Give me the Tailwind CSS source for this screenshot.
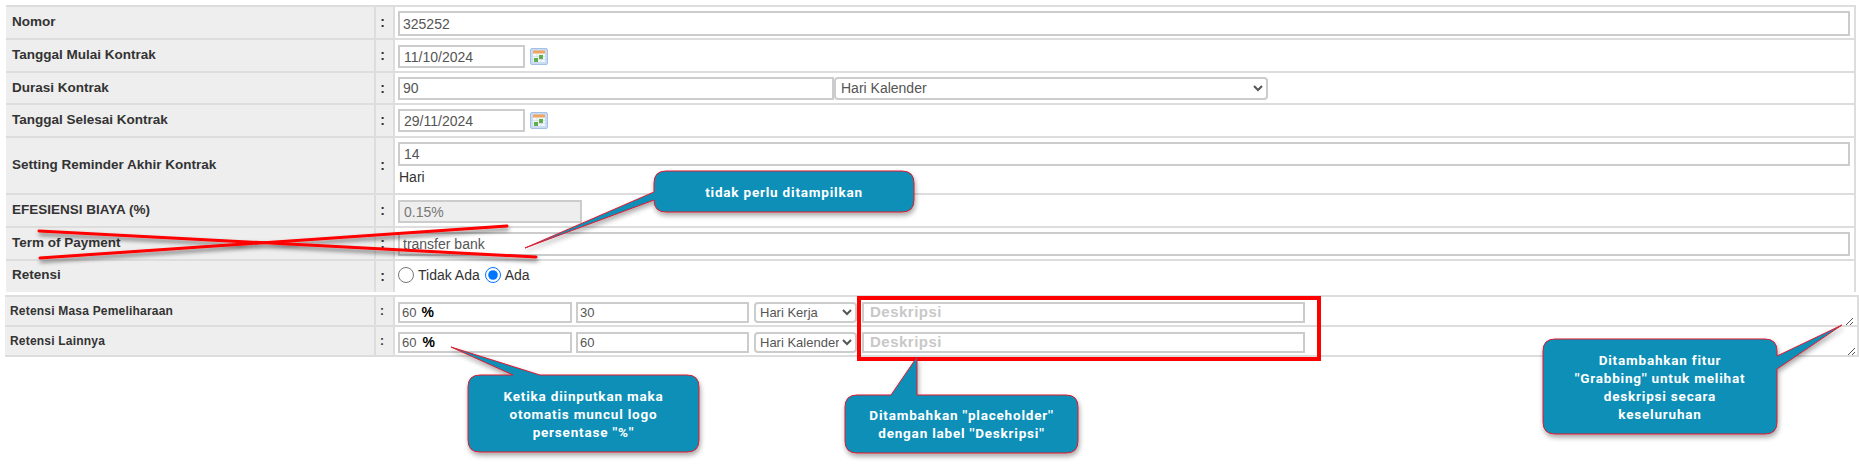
<!DOCTYPE html>
<html lang="en">
<head>
    <meta charset="UTF-8">
    <title>Kontrak</title>
    <script src="https://cdn.jsdelivr.net/npm/@tailwindcss/browser@4"></script>
</head>
<body class="relative h-[464px] overflow-hidden bg-white font-['Liberation_Sans',Arial,sans-serif] text-[14px] text-[#333]">

    <!-- form utama -->
    <div class="pt-[5px] pl-[6px] pr-[3px]">
        <table class="w-full table-fixed border-collapse border-t-2 border-[#ddd]">
            <colgroup>
                <col class="w-[369px]">
                <col class="w-[19px]">
                <col>
            </colgroup>
            <tbody>
                <tr class="h-[33px]">
                    <td class="bg-[#eee] border-b-2 border-r-2 border-[#ddd] pl-[6px] text-[13.5px] font-bold">Nomor</td>
                    <td class="bg-[#eee] border-b-2 border-r-2 border-[#ddd] pr-[4px] text-center font-bold">:</td>
                    <td class="border-b-2 border-r-2 border-[#ddd] pl-[3px] pr-[4px] pt-[2px]">
                        <input type="text" value="325252" class="block w-full h-[25px] border-2 border-[#ccc] px-[3px] text-[#555]">
                    </td>
                </tr>
                <tr class="h-[33px]">
                    <td class="bg-[#eee] border-b-2 border-r-2 border-[#ddd] pl-[6px] text-[13.5px] font-bold">Tanggal Mulai Kontrak</td>
                    <td class="bg-[#eee] border-b-2 border-r-2 border-[#ddd] pr-[4px] text-center font-bold">:</td>
                    <td class="border-b-2 border-r-2 border-[#ddd] pl-[3px] pr-[4px] pt-[2px]">
                        <div class="flex items-center gap-[5px]">
                            <input type="text" value="11/10/2024" class="w-[127px] h-[23px] border-2 border-[#ccc] px-[4px] text-[#555]">
                            <svg width="18" height="17" viewBox="0 0 18 17">
                                <rect x="0.5" y="0.5" width="17" height="16" rx="1.5" fill="#c9dcf3" stroke="#a5c0e4"/>
                                <rect x="3" y="3" width="12" height="11" fill="#f4f8fb"/>
                                <rect x="3" y="2.5" width="12" height="3" fill="#f0a45c"/>
                                <path d="M3 8.5H15M3 11.5H15M7 6V14M11 6V14" stroke="#cfdbe6" stroke-width="0.7"/>
                                <rect x="4" y="10" width="4" height="4" fill="#62ad4a"/>
                                <rect x="9" y="7" width="4" height="4" fill="#62ad4a"/>
                            </svg>
                        </div>
                    </td>
                </tr>
                <tr class="h-[32px]">
                    <td class="bg-[#eee] border-b-2 border-r-2 border-[#ddd] pl-[6px] text-[13.5px] font-bold">Durasi Kontrak</td>
                    <td class="bg-[#eee] border-b-2 border-r-2 border-[#ddd] pr-[4px] text-center font-bold">:</td>
                    <td class="border-b-2 border-r-2 border-[#ddd] pl-[3px] pr-[4px]">
                        <div class="flex">
                            <input type="text" value="90" class="w-[436px] h-[23px] border-2 border-[#ccc] px-[3px] text-[#555]">
                            <select class="w-[434px] h-[23px] border-2 border-[#ccc] rounded-[4px] bg-white pl-[1px] text-[#555]">
                                <option>Hari Kalender</option>
                            </select>
                        </div>
                    </td>
                </tr>
                <tr class="h-[33px]">
                    <td class="bg-[#eee] border-b-2 border-r-2 border-[#ddd] pl-[6px] text-[13.5px] font-bold">Tanggal Selesai Kontrak</td>
                    <td class="bg-[#eee] border-b-2 border-r-2 border-[#ddd] pr-[4px] text-center font-bold">:</td>
                    <td class="border-b-2 border-r-2 border-[#ddd] pl-[3px] pr-[4px]">
                        <div class="flex items-center gap-[5px]">
                            <input type="text" value="29/11/2024" class="w-[127px] h-[23px] border-2 border-[#ccc] px-[4px] text-[#555]">
                            <svg width="18" height="17" viewBox="0 0 18 17">
                                <rect x="0.5" y="0.5" width="17" height="16" rx="1.5" fill="#c9dcf3" stroke="#a5c0e4"/>
                                <rect x="3" y="3" width="12" height="11" fill="#f4f8fb"/>
                                <rect x="3" y="2.5" width="12" height="3" fill="#f0a45c"/>
                                <path d="M3 8.5H15M3 11.5H15M7 6V14M11 6V14" stroke="#cfdbe6" stroke-width="0.7"/>
                                <rect x="4" y="10" width="4" height="4" fill="#62ad4a"/>
                                <rect x="9" y="7" width="4" height="4" fill="#62ad4a"/>
                            </svg>
                        </div>
                    </td>
                </tr>
                <tr class="h-[57px]">
                    <td class="bg-[#eee] border-b-2 border-r-2 border-[#ddd] pl-[6px] text-[13.5px] font-bold">Setting Reminder Akhir Kontrak</td>
                    <td class="bg-[#eee] border-b-2 border-r-2 border-[#ddd] pr-[4px] text-center font-bold">:</td>
                    <td class="align-top border-b-2 border-r-2 border-[#ddd] pl-[3px] pr-[4px] pt-[4px]">
                        <input type="text" value="14" class="block w-full h-[24px] border-2 border-[#ccc] px-[4px] text-[#555]">
                        <div class="mt-[3px] pl-[1px] leading-[17px]">Hari</div>
                    </td>
                </tr>
                <tr class="h-[33px]">
                    <td class="bg-[#eee] border-b-2 border-r-2 border-[#ddd] pl-[6px] text-[13.5px] font-bold">EFESIENSI BIAYA (%)</td>
                    <td class="bg-[#eee] border-b-2 border-r-2 border-[#ddd] pr-[4px] text-center font-bold">:</td>
                    <td class="border-b-2 border-r-2 border-[#ddd] pl-[3px] pr-[4px] pt-[2px]">
                        <input type="text" value="0.15%" disabled class="block w-[184px] h-[23px] border-2 border-[#ccc] bg-[#eee] px-[4px] text-[#777]">
                    </td>
                </tr>
                <tr class="h-[33px]">
                    <td class="bg-[#eee] border-b-2 border-r-2 border-[#ddd] pl-[6px] text-[13.5px] font-bold">Term of Payment</td>
                    <td class="bg-[#eee] border-b-2 border-r-2 border-[#ddd] pr-[4px] text-center font-bold">:</td>
                    <td class="border-b-2 border-r-2 border-[#ddd] pl-[3px] pr-[4px]">
                        <input type="text" value="transfer bank" class="block w-full h-[24px] border-2 border-[#ccc] px-[3px] text-[#555]">
                    </td>
                </tr>
                <tr class="h-[32px]">
                    <td class="bg-[#eee] border-r-2 border-[#ddd] pl-[6px] pb-[2px] text-[13.5px] font-bold">Retensi</td>
                    <td class="bg-[#eee] border-r-2 border-[#ddd] pr-[4px] text-center font-bold">:</td>
                    <td class="border-r-2 border-[#ddd] pl-[3px] pr-[4px] pb-[3px]">
                        <div class="flex items-center">
                            <input type="radio" name="retensi" class="w-4 h-4 m-0">
                            <span class="ml-[4px] mr-[5px]">Tidak Ada</span>
                            <input type="radio" name="retensi" checked class="w-4 h-4 m-0">
                            <span class="ml-[4px]">Ada</span>
                        </div>
                    </td>
                </tr>
            </tbody>
        </table>
    </div>

    <!-- retensi -->
    <div class="mt-[3px] pl-[5px]">
        <table class="w-full table-fixed border-collapse border-t-2 border-[#ddd]">
            <colgroup>
                <col class="w-[370px]">
                <col class="w-[19px]">
                <col>
            </colgroup>
            <tbody>
                <tr class="h-[30px]">
                    <td class="bg-[#eee] border-b-2 border-r-2 border-[#ddd] pl-[5px] text-[12px] tracking-[0.2px] font-bold">Retensi Masa Pemeliharaan</td>
                    <td class="bg-[#eee] border-b-2 border-r-2 border-[#ddd] pr-[5px] text-center text-[12px] font-bold">:</td>
                    <td class="border-b-2 border-r-2 border-[#ddd] pl-[3px] pr-[4px] pt-[3px]">
                        <div class="flex text-[13px]">
                            <div class="flex items-center w-[174px] h-[21px] border-2 border-[#ccc] px-[2px] text-[#555]">60<b class="ml-[5px] text-[14px] text-black">%</b></div>
                            <input type="text" value="30" class="ml-[4px] w-[173px] h-[21px] border-2 border-[#ccc] px-[2px] text-[#555]">
                            <select class="ml-[5px] w-[103px] h-[21px] border-2 border-[#ccc] rounded-[4px] bg-white text-[#555]">
                                <option>Hari Kerja</option>
                            </select>
                            <input type="text" placeholder="Deskripsi" class="ml-[5px] w-[443px] h-[21px] border-2 border-[#ccc] px-[6px] text-[15px] font-bold tracking-[0.5px] placeholder:text-[#c8c8c8]">
                        </div>
                    </td>
                </tr>
                <tr class="h-[30px]">
                    <td class="bg-[#eee] border-b-2 border-r-2 border-[#ddd] pl-[5px] text-[12px] tracking-[0.2px] font-bold">Retensi Lainnya</td>
                    <td class="bg-[#eee] border-b-2 border-r-2 border-[#ddd] pr-[5px] text-center text-[12px] font-bold">:</td>
                    <td class="border-b-2 border-r-2 border-[#ddd] pl-[3px] pr-[4px] pt-[3px]">
                        <div class="flex text-[13px]">
                            <div class="flex items-center w-[174px] h-[21px] border-2 border-[#ccc] px-[2px] text-[#555]">60<b class="ml-[6px] text-[14px] text-black">%</b></div>
                            <input type="text" value="60" class="ml-[4px] w-[173px] h-[21px] border-2 border-[#ccc] px-[2px] text-[#555]">
                            <select class="ml-[5px] w-[103px] h-[21px] border-2 border-[#ccc] rounded-[4px] bg-white text-[#555]">
                                <option>Hari Kalender</option>
                            </select>
                            <input type="text" placeholder="Deskripsi" class="ml-[5px] w-[443px] h-[21px] border-2 border-[#ccc] px-[6px] text-[15px] font-bold tracking-[0.5px] placeholder:text-[#c8c8c8]">
                        </div>
                    </td>
                </tr>
            </tbody>
        </table>
    </div>

    <!-- anotasi di atas screenshot -->
    <div class="absolute left-[857px] top-[296px] w-[464px] h-[65px] border-4 border-[#f00]"></div>

    <svg class="absolute left-0 top-0" width="1859" height="464" viewBox="0 0 1859 464" fill="none">
        <defs>
            <filter id="shadow" x="-20%" y="-50%" width="140%" height="200%">
                <feDropShadow dx="1" dy="3" stdDeviation="2.5" flood-color="#000" flood-opacity="0.35"/>
            </filter>
            <filter id="lineShadow" x="-5%" y="-50%" width="110%" height="220%">
                <feDropShadow dx="1" dy="3" stdDeviation="2" flood-color="#000" flood-opacity="0.55"/>
            </filter>
        </defs>
        <!-- grip resize -->
        <path d="M1846 325L1853 318M1850 325L1853 322" stroke="#555" stroke-width="1"/>
        <path d="M1848 355L1855 348M1852 355L1855 352" stroke="#555" stroke-width="1"/>
        <!-- garis coret -->
        <g filter="url(#lineShadow)" stroke="#f00" stroke-width="3" stroke-linecap="round">
            <path d="M39 231L536 257"/>
            <path d="M40 258L507 226"/>
        </g>
        <g filter="url(#shadow)" fill="#0c8fb8" stroke="#e01b2f" stroke-width="1">
            <path d="M666 171H902Q914 171 914 183V200Q914 212 902 212H666Q654 212 654 200L525 248L654 192V183Q654 171 666 171Z"/>
            <path d="M480 375H513L451 347L540 375H687Q699 375 699 387V440Q699 452 687 452H480Q468 452 468 440V387Q468 375 480 375Z"/>
            <path d="M857 395H891L917 357V395H1066Q1078 395 1078 407V441Q1078 453 1066 453H857Q845 453 845 441V407Q845 395 857 395Z"/>
            <path d="M1555 339H1765Q1777 339 1777 351V356L1842 325L1777 369V422Q1777 434 1765 434H1555Q1543 434 1543 422V351Q1543 339 1555 339Z"/>
        </g>
    </svg>

    <div class="absolute left-[654px] top-[171px] w-[260px] h-[41px] flex items-center justify-center text-center font-['Roboto',sans-serif] text-[13.5px] leading-[18px] font-bold tracking-[0.8px] text-white">tidak perlu ditampilkan</div>
    <div class="absolute left-[468px] top-[375px] w-[231px] h-[77px] flex items-center justify-center text-center font-['Roboto',sans-serif] text-[13.5px] leading-[18px] font-bold tracking-[0.8px] text-white">Ketika diinputkan maka<br>otomatis muncul logo<br>persentase ''%''</div>
    <div class="absolute left-[845px] top-[395px] w-[233px] h-[58px] flex items-center justify-center text-center font-['Roboto',sans-serif] text-[13.5px] leading-[18px] font-bold tracking-[0.8px] text-white">Ditambahkan ''placeholder''<br>dengan label ''Deskripsi''</div>
    <div class="absolute left-[1543px] top-[339px] w-[234px] h-[95px] flex items-center justify-center text-center font-['Roboto',sans-serif] text-[13.5px] leading-[18px] font-bold tracking-[0.8px] text-white">Ditambahkan fitur<br>''Grabbing'' untuk melihat<br>deskripsi secara<br>keseluruhan</div>

</body>
</html>
